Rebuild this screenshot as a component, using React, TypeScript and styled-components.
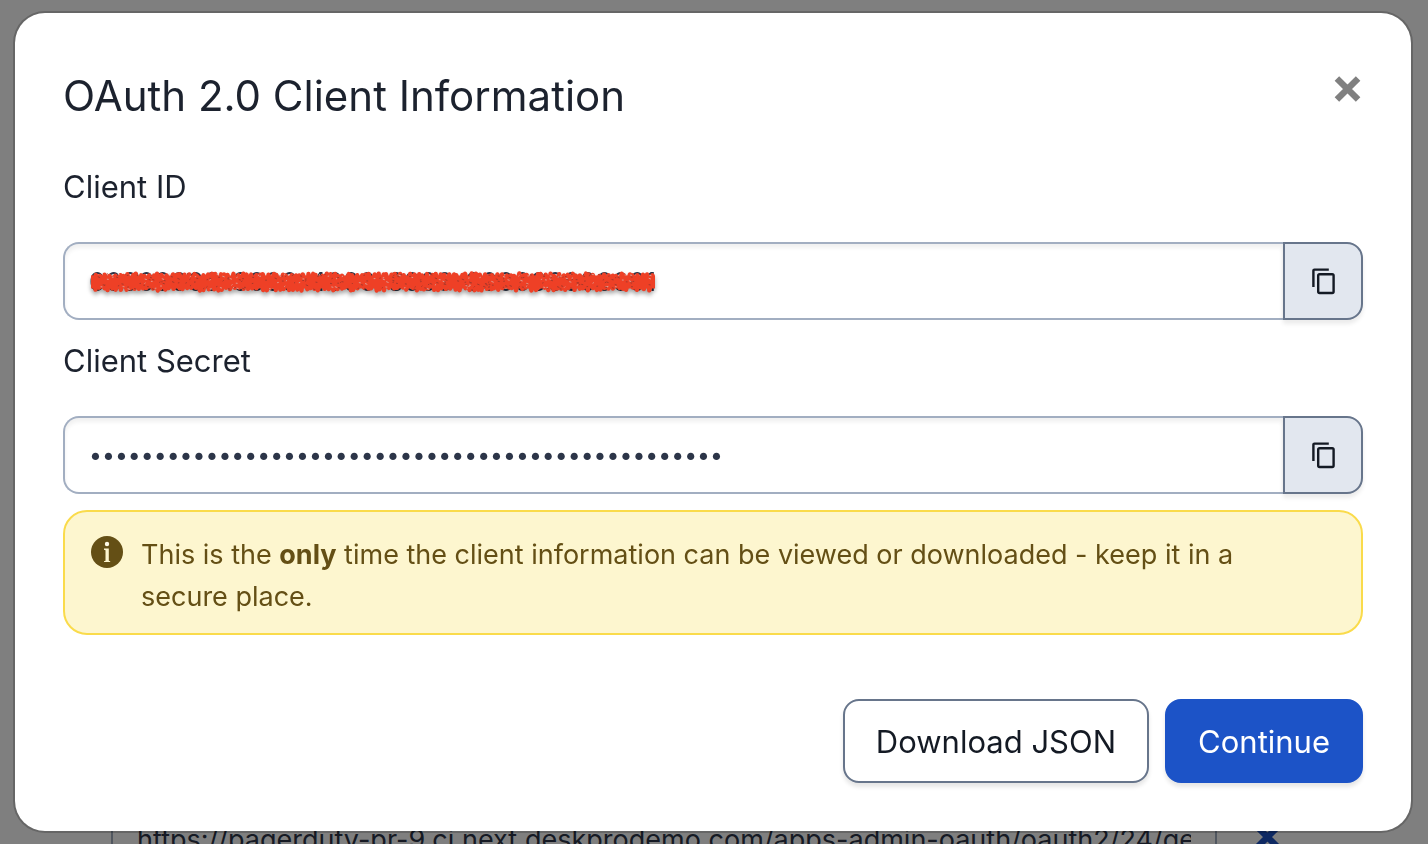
import React from "react";
import styled, { createGlobalStyle } from "styled-components";

const Global = createGlobalStyle`
  *, *::before, *::after { box-sizing: border-box; }
  body { margin: 0; background: #fff; color: #1c222e; font-family: Inter, "Liberation Sans", sans-serif; }
  button, input { font-family: inherit; margin: 0; }
`;

const Page = styled.main`
  display: flex;
  flex-direction: column;
  justify-content: flex-end;
  height: 100vh;
  overflow: hidden;
`;

const UrlRow = styled.div`
  display: flex;
  align-items: center;
  gap: 36px;
  margin: 0 147px -34px 111px;
`;

const UrlInput = styled.input`
  flex: 1;
  min-width: 0;
  height: 78px;
  padding: 0 24px;
  border: 2px solid #a2aec1;
  border-radius: 16px 0 0 16px;
  color: #2c3548;
  font-size: 27px;
`;

const RemoveButton = styled.button`
  display: flex;
  padding: 0 0 4px;
  border: 0;
  background: none;
  color: #1c53c7;
`;

const Scrim = styled.div`
  position: fixed;
  inset: 0;
  padding: 11px 15px 11px 13px;
  background: rgba(0, 0, 0, 0.5);
`;

const Dialog = styled.section`
  padding: 48px;
  border: 2px solid rgba(0, 0, 0, 0.2);
  border-radius: 32px;
  background: #fff;
  background-clip: padding-box;
`;

const Header = styled.header`
  display: flex;
  justify-content: space-between;
  align-items: flex-start;
  margin-bottom: 31px;
`;

const Title = styled.h1`
  margin: 0;
  font-size: 42px;
  font-weight: 400;
  line-height: 70px;
`;

const CloseButton = styled.button`
  display: flex;
  padding: 14px 2px;
  border: 0;
  background: none;
  color: #808080;
`;

const Field = styled.div`
  margin-bottom: 16px;
`;

const Label = styled.label`
  display: block;
  margin-bottom: 30px;
  font-size: 31px;
  line-height: 50px;
`;

const InputGroup = styled.div`
  position: relative;
  display: flex;
  height: 78px;
`;

const TextInput = styled.input`
  flex: 1;
  min-width: 0;
  padding: 0 24px;
  border: 2px solid #a2aec1;
  border-right: 0;
  border-radius: 16px 0 0 16px;
  box-shadow: inset 0 4px 4px rgba(0, 0, 0, 0.06);
  background: #fff;
  color: #2c3548;
  font-size: 26px;

  &[type="password"] { font-size: 23px; }
`;

const CopyButton = styled.button`
  display: flex;
  align-items: center;
  justify-content: center;
  width: 80px;
  padding: 0;
  border: 2px solid #67758b;
  border-radius: 0 16px 16px 0;
  background: #e2e7ef;
  box-shadow: 0 4px 4px rgba(0, 0, 0, 0.08);
  color: #141a24;
`;

const Scribble = styled.svg`
  position: absolute;
  top: 26px;
  left: 26px;
  filter: drop-shadow(0 3px 2px rgba(0, 0, 0, 0.35));
`;

const Notice = styled.div`
  display: flex;
  gap: 18px;
  padding: 22px 40px 15px 26px;
  border: 2px solid #fadb4b;
  border-radius: 24px;
  background: #fdf6cf;
  color: #644f15;
  font-size: 27px;
  line-height: 42px;

  svg { flex: none; margin-top: 2px; }
  p { margin: 0; }
`;

const Footer = styled.footer`
  display: flex;
  justify-content: flex-end;
  gap: 16px;
  margin-top: 64px;
`;

const Button = styled.button<{ $primary?: boolean }>`
  height: 84px;
  padding: 0 31px;
  border: 2px solid ${(p) => (p.$primary ? "#1c53c7" : "#67758b")};
  border-radius: 16px;
  background: ${(p) => (p.$primary ? "#1c53c7" : "#fff")};
  box-shadow: 0 4px 4px rgba(0, 0, 0, 0.1);
  color: ${(p) => (p.$primary ? "#fff" : "#141a24")};
  font-size: 31px;
`;

const Cross = () => (
  <svg width="28" height="28" viewBox="0 0 28 28" stroke="currentColor" strokeWidth="6.4" aria-hidden="true">
    <path d="M3.9 3.4 25.1 24.6M25.1 3.4 3.9 24.6" />
  </svg>
);

const CopyIcon = () => (
  <svg width="24" height="28" viewBox="0 0 24 28" fill="none" stroke="currentColor" strokeWidth="2.4" aria-hidden="true">
    <path d="M2.4 20V3.6a1 1 0 0 1 1-1H17.8" />
    <rect x="7.2" y="7.2" width="15.4" height="18.8" rx="1.4" />
  </svg>
);

const InfoIcon = () => (
  <svg width="32" height="32" viewBox="0 0 32 32" aria-hidden="true">
    <circle cx="16" cy="16" r="16" fill="currentColor" />
    <circle cx="16" cy="8" r="2.2" fill="#fffbe6" />
    <path d="M13 12.6h4.8v12.2l1.4.4v.9h-6.2v-.9l1.5-.4V14.2l-1.5-.5z" fill="#fdf6cf" />
  </svg>
);

// Deterministic noise keeps the marker stroke identical on every render.
const noise = (i: number) => {
  const v = Math.sin(i * 127.1 + 11.7) * 43758.5453;
  return v - Math.floor(v);
};

const zigzag = Array.from({ length: 256 }, (_, i) => {
  const x = 2 + i * 2.2;
  const y = i % 2 ? 19.5 + noise(i) * 3 : 5.5 + noise(i) * 2.5;
  return `${i ? "L" : "M"}${(x + noise(i + 400) * 3).toFixed(1)} ${y.toFixed(1)}`;
}).join("");

const flecks = Array.from({ length: 280 }, (_, i) => ({
  x: 4 + noise(i + 900) * 558,
  y: 6 + noise(i + 1500) * 15,
  r: noise(i + 2100),
}));

const MarkerStroke = () => (
  <Scribble width="568" height="28" viewBox="0 0 568 28" aria-hidden="true">
    <g fill="none" stroke="#ee4026" strokeLinejoin="round">
      <path d="M2 14H566" strokeWidth="13" />
      <path d={zigzag} strokeWidth="4.4" />
    </g>
    {flecks.map((f, i) => (
      <path
        key={i}
        d={`M${f.x.toFixed(1)} ${f.y.toFixed(1)}l${(1 + f.r * 1.4).toFixed(1)} ${(f.r * 2 - 1).toFixed(1)}`}
        stroke={i % 3 ? "#a8382b" : "#dc9a90"}
        strokeWidth="1"
      />
    ))}
  </Scribble>
);

export default function App() {
  return (
    <>
      <Global />
      <Page>
        <UrlRow>
          <UrlInput
            aria-label="Callback URL"
            readOnly
            value="https://pagerduty-pr-9.ci.next.deskprodemo.com/apps-admin-oauth/oauth2/24/get"
          />
          <RemoveButton aria-label="Remove"><Cross /></RemoveButton>
        </UrlRow>
      </Page>
      <Scrim>
        <Dialog role="dialog" aria-modal="true" aria-labelledby="dialog-title">
          <Header>
            <Title id="dialog-title">OAuth 2.0 Client Information</Title>
            <CloseButton aria-label="Close"><Cross /></CloseButton>
          </Header>
          <Field>
            <Label htmlFor="client-id">Client ID</Label>
            <InputGroup>
              <TextInput id="client-id" readOnly value="00000000-0000-4000-8000-000000000001" />
              <MarkerStroke />
              <CopyButton aria-label="Copy client ID"><CopyIcon /></CopyButton>
            </InputGroup>
          </Field>
          <Field>
            <Label htmlFor="client-secret">Client Secret</Label>
            <InputGroup>
              <TextInput id="client-secret" type="password" readOnly value={"x".repeat(49)} />
              <CopyButton aria-label="Copy client secret"><CopyIcon /></CopyButton>
            </InputGroup>
          </Field>
          <Notice role="note">
            <InfoIcon />
            <p>
              This is the <strong>only</strong> time the client information can be viewed or downloaded - keep it in a
              secure place.
            </p>
          </Notice>
          <Footer>
            <Button type="button">Download JSON</Button>
            <Button type="button" $primary>Continue</Button>
          </Footer>
        </Dialog>
      </Scrim>
    </>
  );
}
